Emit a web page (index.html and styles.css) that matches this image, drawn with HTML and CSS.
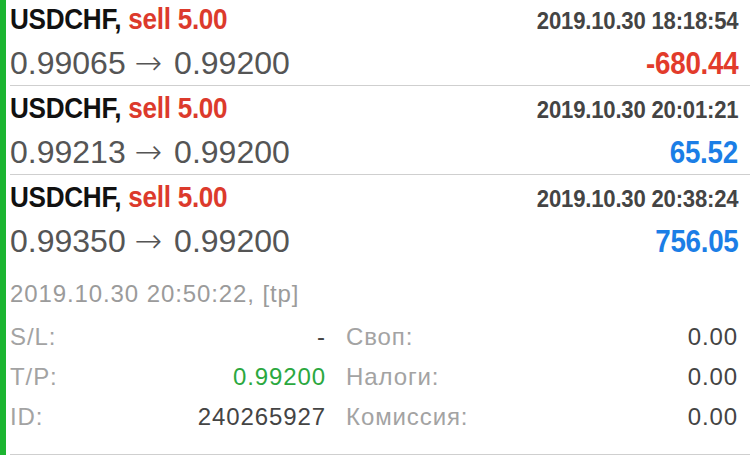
FILE: index.html
```html
<!DOCTYPE html>
<html lang="ru">
<head>
    <meta charset="UTF-8">
    <meta name="viewport" content="width=device-width, initial-scale=1.0">
    <title>История сделок</title>
    <link rel="stylesheet" href="styles.css">
</head>
<body>
    <!-- Deals list -->
    <div class="deals">
        <div class="deal">
            <div class="deal-head">
                <span class="deal-title">USDCHF, <span class="side">sell 5.00</span></span>
                <span class="deal-time">2019.10.30 18:18:54</span>
            </div>
            <div class="deal-prices">
                <span class="prices">0.99065 <span class="arrow">→</span> 0.99200</span>
                <span class="profit loss">-680.44</span>
            </div>
        </div>

        <div class="deal">
            <div class="deal-head">
                <span class="deal-title">USDCHF, <span class="side">sell 5.00</span></span>
                <span class="deal-time">2019.10.30 20:01:21</span>
            </div>
            <div class="deal-prices">
                <span class="prices">0.99213 <span class="arrow">→</span> 0.99200</span>
                <span class="profit gain">65.52</span>
            </div>
        </div>

        <div class="deal open">
            <div class="deal-head">
                <span class="deal-title">USDCHF, <span class="side">sell 5.00</span></span>
                <span class="deal-time">2019.10.30 20:38:24</span>
            </div>
            <div class="deal-prices">
                <span class="prices">0.99350 <span class="arrow">→</span> 0.99200</span>
                <span class="profit gain">756.05</span>
            </div>

            <!-- Expanded details -->
            <div class="deal-details">
                <div class="close-time">2019.10.30 20:50:22, [tp]</div>
                <div class="details-grid">
                    <div class="pair"><span class="label">S/L:</span><span class="value">-</span></div>
                    <div class="pair"><span class="label">Своп:</span><span class="value">0.00</span></div>
                    <div class="pair"><span class="label">T/P:</span><span class="value tp">0.99200</span></div>
                    <div class="pair"><span class="label">Налоги:</span><span class="value">0.00</span></div>
                    <div class="pair"><span class="label">ID:</span><span class="value">240265927</span></div>
                    <div class="pair"><span class="label">Комиссия:</span><span class="value">0.00</span></div>
                </div>
            </div>
        </div>
    </div>
</body>
</html>
```

FILE: styles.css
```css
/* General Styling */
* {
    margin: 0;
    padding: 0;
    box-sizing: border-box;
}
body {
    font-family: 'Liberation Sans', Arial, sans-serif;
    background-color: #fff;
    color: #333;
    overflow: hidden;
}

/* Deals list */
.deals {
    margin-top: -3px;
    border-left: 6px solid #1cb531;
    padding-left: 4px;
}
.deal {
    border-bottom: 1px solid #cfcfcf;
    padding-right: 12px;
}
.deal-head, .deal-prices {
    display: flex;
    justify-content: space-between;
    align-items: baseline;
    height: 44px;
    line-height: 44px;
}

/* Header line (condensed bold look) */
.deal-title {
    display: inline-block;
    font-size: 29px;
    font-weight: bold;
    letter-spacing: -0.3px;
    color: #111;
    transform: scaleX(0.9);
    transform-origin: left center;
}
.deal-title .side {
    color: #dc3a2c;
}
.deal-time {
    display: inline-block;
    font-size: 23.5px;
    font-weight: bold;
    letter-spacing: -0.2px;
    color: #444;
    transform: scaleX(0.94);
    transform-origin: right center;
}

/* Price line */
.prices {
    font-size: 32px;
    color: #555;
}
.arrow {
    font-family: 'DejaVu Sans', sans-serif;
    font-size: 33px;
    font-weight: 200;
    margin-right: 3px;
}
.profit {
    display: inline-block;
    font-size: 30.5px;
    font-weight: bold;
    letter-spacing: -0.3px;
    transform: scaleX(0.91);
    transform-origin: right center;
}
.profit.loss {
    color: #e23b2b;
}
.profit.gain {
    color: #1b7ee6;
}

/* Details */
.deal-details {
    padding: 16px 0 17px;
    font-size: 24px;
    letter-spacing: 0.9px;
}
.close-time {
    line-height: 30px;
    color: #9b9b9b;
}
.details-grid {
    display: grid;
    grid-template-columns: 316px 1fr;
    column-gap: 20px;
    margin-top: 8px;
}
.pair {
    display: flex;
    justify-content: space-between;
    line-height: 40px;
}
.label {
    color: #a3a3a3;
}
.value {
    color: #444;
}
.value.tp {
    color: #2ba83f;
}
```
